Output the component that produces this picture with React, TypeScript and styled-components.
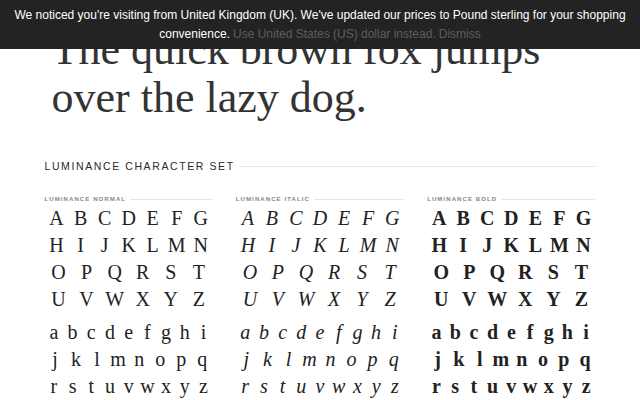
import { createGlobalStyle, styled } from 'styled-components'

const GlobalStyle = createGlobalStyle`
  html, body {
    margin: 0;
    padding: 0;
    background: #ffffff;
  }
`

type Variant = 'normal' | 'italic' | 'bold'

const upper = ['ABCDEFG', 'HIJKLMN', 'OPQRST', 'UVWXYZ']
const lower = ['abcdefghi', 'jklmnopq', 'rstuvwxyz']

const sets: { label: string; variant: Variant }[] = [
  { label: 'Luminance Normal', variant: 'normal' },
  { label: 'Luminance Italic', variant: 'italic' },
  { label: 'Luminance Bold', variant: 'bold' },
]

// 字符集单列
function CharacterColumn({ label, variant }: { label: string; variant: Variant }) {
  return (
    <Column>
      <SubTitle>
        <SubTitleText>{label}</SubTitleText>
        <Rule />
      </SubTitle>
      <LetterGroup>
        {upper.map((row) => (
          <LetterRow key={row} $count={row.length}>
            {row.split('').map((ch) => (
              <Glyph key={ch} $variant={variant}>
                {ch}
              </Glyph>
            ))}
          </LetterRow>
        ))}
      </LetterGroup>
      <LowerGroup>
        {lower.map((row) => (
          <LetterRow key={row} $count={row.length}>
            {row.split('').map((ch) => (
              <Glyph key={ch} $variant={variant}>
                {ch}
              </Glyph>
            ))}
          </LetterRow>
        ))}
      </LowerGroup>
    </Column>
  )
}

export default function App() {
  return (
    <>
      <GlobalStyle />
      <Banner>
        <BannerLine>
          We noticed you're visiting from United Kingdom (UK). We've updated our prices to Pound sterling for your
          shopping
        </BannerLine>
        <BannerLine>
          <span>convenience.</span>
          <BannerLink>Use United States (US) dollar instead.</BannerLink>
          <BannerLink>Dismiss</BannerLink>
        </BannerLine>
      </Banner>
      <Page>
        <Heading>
          The quick brown fox jumps
          <br />
          over the lazy dog.
        </Heading>
        <SectionHeader>
          <SectionTitle>Luminance Character Set</SectionTitle>
          <Rule />
        </SectionHeader>
        <Columns>
          {sets.map((s) => (
            <CharacterColumn key={s.variant} label={s.label} variant={s.variant} />
          ))}
        </Columns>
      </Page>
    </>
  )
}

// ============ 样式组件 ============

const Banner = styled.div`
  position: fixed;
  top: 0;
  left: 0;
  right: 0;
  z-index: 10;
  box-sizing: border-box;
  height: 49px;
  padding: 6px 8px 0;
  background: #232323;
  color: #ffffff;
  font-family: 'Liberation Sans', Arial, sans-serif;
  font-size: 12px;
  line-height: 19px;
`

const BannerLine = styled.div`
  display: flex;
  justify-content: center;
  gap: 3px;
  white-space: nowrap;
`

const BannerLink = styled.span`
  color: #5e5e5e;
`

const Page = styled.div`
  width: 551px;
  margin: 0 auto;
  padding-top: 26px;
  padding-bottom: 20px;
`

const Heading = styled.h1`
  margin: 0 0 0 7px;
  font-family: 'Liberation Serif', 'Times New Roman', serif;
  font-size: 44px;
  line-height: 48px;
  font-weight: 400;
  color: #333333;
`

const SectionHeader = styled.div`
  display: flex;
  align-items: center;
  margin-top: 37px;
`

const SectionTitle = styled.h2`
  margin: 0 5px 0 0;
  font-family: 'Liberation Sans', Arial, sans-serif;
  font-size: 10.5px;
  line-height: 14px;
  font-weight: 400;
  letter-spacing: 1.6px;
  text-transform: uppercase;
  color: #2a2a2a;
  white-space: nowrap;
`

const Rule = styled.div`
  flex: 1;
  height: 1px;
  background: #e7e7e7;
`

const Columns = styled.div`
  display: grid;
  grid-template-columns: repeat(3, 1fr);
  column-gap: 23px;
  margin-top: 22px;
`

const Column = styled.div`
  display: flex;
  flex-direction: column;
`

const SubTitle = styled.div`
  display: flex;
  align-items: center;
  gap: 4px;
`

const SubTitleText = styled.span`
  font-family: 'Liberation Sans', Arial, sans-serif;
  font-size: 6px;
  line-height: 8px;
  font-weight: 700;
  letter-spacing: 1.1px;
  text-transform: uppercase;
  color: #858585;
  white-space: nowrap;
`

const LetterGroup = styled.div`
  margin-top: 2px;
`

const LowerGroup = styled.div`
  margin-top: 6px;
`

const LetterRow = styled.div<{ $count: number }>`
  display: grid;
  grid-template-columns: repeat(${(props) => props.$count}, 1fr);
  text-align: center;
`

const Glyph = styled.span<{ $variant: Variant }>`
  font-family: 'Liberation Serif', 'Times New Roman', serif;
  font-size: 20px;
  line-height: 27px;
  color: #222222;
  font-style: ${(props) => (props.$variant === 'italic' ? 'italic' : 'normal')};
  font-weight: ${(props) => (props.$variant === 'bold' ? 700 : 400)};
`
